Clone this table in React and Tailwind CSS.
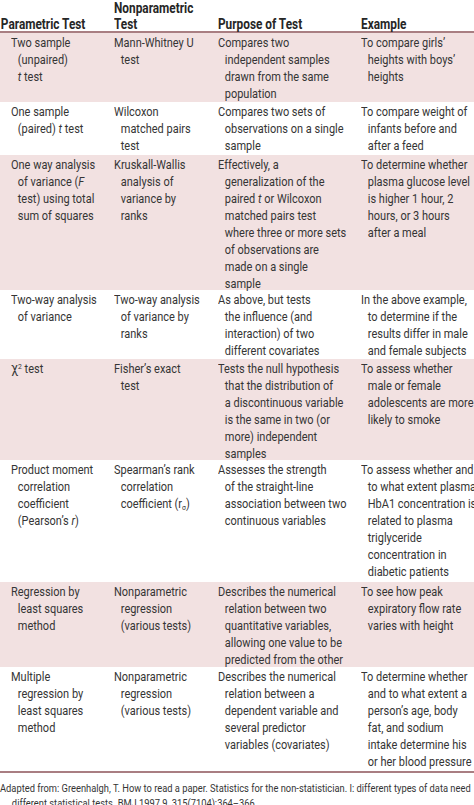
const rows = [
  {
    h: "h-[69px]",
    bg: "bg-[#f2e1e1]",
    cells: [
      ["Two sample", "(unpaired)", <><i>t</i> test</>],
      ["Mann-Whitney U", "test"],
      ["Compares two", "independent samples", "drawn from the same", "population"],
      ["To compare girls’", "heights with boys’", "heights"],
    ],
  },
  {
    h: "h-[53px]",
    bg: "bg-white",
    cells: [
      ["One sample", <>(paired) <i>t</i> test</>],
      ["Wilcoxon", "matched pairs", "test"],
      ["Compares two sets of", "observations on a single", "sample"],
      ["To compare weight of", "infants before and", "after a feed"],
    ],
  },
  {
    h: "h-[135px]",
    bg: "bg-[#f2e1e1]",
    cells: [
      ["One way analysis", <>of variance (<i>F</i></>, "test) using total", "sum of squares"],
      ["Kruskall-Wallis", "analysis of", "variance by", "ranks"],
      [
        "Effectively, a",
        "generalization of the",
        <>paired <i>t</i> or Wilcoxon</>,
        "matched pairs test",
        "where three or more sets",
        "of observations are",
        "made on a single",
        "sample",
      ],
      ["To determine whether", "plasma glucose level", "is higher 1 hour, 2", "hours, or 3 hours", "after a meal"],
    ],
  },
  {
    h: "h-[69px]",
    bg: "bg-white",
    cells: [
      ["Two-way analysis", "of variance"],
      ["Two-way analysis", "of variance by", "ranks"],
      ["As above, but tests", "the influence (and", "interaction) of two", "different covariates"],
      ["In the above example,", "to determine if the", "results differ in male", "and female subjects"],
    ],
  },
  {
    h: "h-[101px]",
    bg: "bg-[#f2e1e1]",
    cells: [
      [<><span className="text-[15px]">χ</span><sup className="text-[8px]">2</sup> test</>],
      ["Fisher’s exact", "test"],
      [
        "Tests the null hypothesis",
        "that the distribution of",
        "a discontinuous variable",
        "is the same in two (or",
        "more) independent",
        "samples",
      ],
      ["To assess whether", "male or female", "adolescents are more", "likely to smoke"],
    ],
  },
  {
    h: "h-[122px]",
    bg: "bg-white",
    cells: [
      ["Product moment", "correlation", "coefficient", <>(Pearson’s <i>r</i>)</>],
      ["Spearman’s rank", "correlation", <>coefficient (r<sub className="text-[8px]">σ</sub>)</>],
      ["Assesses the strength", "of the straight-line", "association between two", "continuous variables"],
      [
        "To assess whether and",
        "to what extent plasma",
        "HbA1 concentration is",
        "related to plasma",
        "triglyceride",
        "concentration in",
        "diabetic patients",
      ],
    ],
  },
  {
    h: "h-[85px]",
    bg: "bg-[#f2e1e1]",
    cells: [
      ["Regression by", "least squares", "method"],
      ["Nonparametric", "regression", "(various tests)"],
      [
        "Describes the numerical",
        "relation between two",
        "quantitative variables,",
        "allowing one value to be",
        "predicted from the other",
      ],
      ["To see how peak", "expiratory flow rate", "varies with height"],
    ],
  },
  {
    h: "h-[104px]",
    bg: "bg-white",
    cells: [
      ["Multiple", "regression by", "least squares", "method"],
      ["Nonparametric", "regression", "(various tests)"],
      [
        "Describes the numerical",
        "relation between a",
        "dependent variable and",
        "several predictor",
        "variables (covariates)",
      ],
      [
        "To determine whether",
        "and to what extent a",
        "person’s age, body",
        "fat, and sodium",
        "intake determine his",
        "or her blood pressure",
      ],
    ],
  },
];

const cols = "grid grid-cols-[114px_104px_143px_113px]";
const pads = ["pl-[11px]", "pl-0", "pl-0", "pl-0"];

// the printed table uses a condensed face; squeeze Roboto horizontally to match
const narrow = "origin-left scale-x-[0.845]";

function Cell({ lines, pad }) {
  return (
    <div className={`${pad} pt-[1px]`}>
      <div className={narrow}>
        {lines.map((line, i) => (
          <div key={i} className={`whitespace-nowrap ${i > 0 ? "pl-[8px]" : ""}`}>
            {line}
          </div>
        ))}
      </div>
    </div>
  );
}

export default function App() {
  return (
    <div
      className="w-[474px] h-[805px] overflow-hidden bg-white text-[#353535] text-[13px] leading-[17px]"
      style={{ fontFamily: 'Roboto, "Liberation Sans", sans-serif' }}
    >
      {/* Header */}
      <div className={`${cols} h-[33px] items-end pb-[1px] border-b-2 border-[#a97e82] font-bold text-[#262626] text-[14px] leading-[16px]`}>
        <div className={`pl-[1px] whitespace-nowrap ${narrow}`}>Parametric Test</div>
        <div className={narrow}>
          <div>Nonparametric</div>
          <div>Test</div>
        </div>
        <div className={`whitespace-nowrap ${narrow}`}>Purpose of Test</div>
        <div className={narrow}>Example</div>
      </div>

      {rows.map((row, r) => (
        <div key={r} className={`${cols} ${row.h} ${row.bg}`}>
          {row.cells.map((lines, c) => (
            <Cell key={c} lines={lines} pad={pads[c]} />
          ))}
        </div>
      ))}

      <div className="border-t-2 border-[#a97e82]" />

      {/* Source note */}
      <div className="pt-[8px] text-[11px] leading-[15px] origin-left scale-x-[0.848]">
        <div className="whitespace-nowrap">
          Adapted from: Greenhalgh, T. How to read a paper. Statistics for the non-statistician. I: different types of data need
        </div>
        <div className="whitespace-nowrap pl-[14px]">
          different statistical tests. BMJ 1997 9, 315(7104):364–366.
        </div>
      </div>
    </div>
  );
}
